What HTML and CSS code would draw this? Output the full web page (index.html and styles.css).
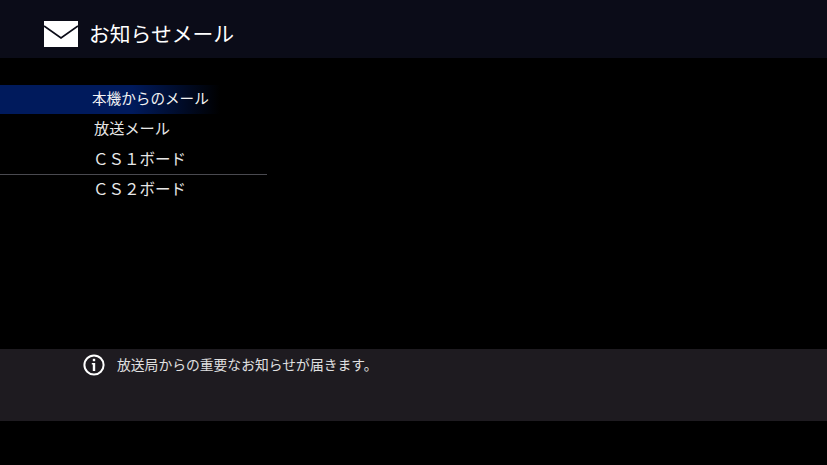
FILE: index.html
```html
<!DOCTYPE html>
<html lang="ja">
<head>
  <meta charset="UTF-8">
  <title>お知らせメール</title>
  <link rel="stylesheet" href="styles.css">
</head>
<body>

<header class="title-bar">
  <svg class="mail-icon" width="34" height="26" viewBox="0 0 34 26">
    <rect width="34" height="26" fill="#fff"/>
    <path d="M0 5 L17 17 L34 5" fill="none" stroke="#0b0c18" stroke-width="1.8"/>
  </svg>
  <h1 class="title">お知らせメール</h1>
</header>

<!-- Mail list -->
<ul class="menu">
  <li class="menu-item selected">本機からのメール</li>
  <li class="menu-item broadcast">放送メール</li>
  <li class="menu-item divided">ＣＳ１ボード</li>
  <li class="menu-item">ＣＳ２ボード</li>
</ul>

<!-- Help bar -->
<div class="help-bar">
  <svg class="info-icon" width="22" height="22" viewBox="0 0 22 22">
    <circle cx="11" cy="11" r="9.6" fill="none" stroke="#fff" stroke-width="2"/>
    <rect x="9.8" y="4.8" width="2.4" height="2.4" fill="#fff"/>
    <path d="M8.8 9 H12.2 V17 H9.8 V10.4 H8.8 Z" fill="#fff"/>
  </svg>
  <p class="help-text">放送局からの重要なお知らせが届きます。</p>
</div>

</body>
</html>
```

FILE: styles.css
```css
* {
  margin: 0;
  padding: 0;
  box-sizing: border-box;
  font-family: "Noto Sans CJK JP", "Liberation Sans", sans-serif;
}

html, body {
  height: 100%;
  overflow: hidden;
}

body {
  background: #000;
  color: #fff;
  display: flex;
  flex-direction: column;
}

.title-bar {
  height: 58px;
  background: #0b0c18;
  display: flex;
  align-items: center;
  padding: 10px 0 0 44px;
  flex-shrink: 0;
}

.mail-icon {
  margin-right: 11px;
}

.title {
  font-size: 20.8px;
  font-weight: 400;
  line-height: 26px;
  padding-bottom: 2px;
}

.menu {
  list-style: none;
  margin-top: 27px;
  width: 267px;
  flex-grow: 1;
}

.menu-item {
  height: 30px;
  padding-left: 93px;
  font-size: 15.5px;
  line-height: 28px;
  color: #e8e8e8;
}

.menu-item.selected {
  width: 220px;
  height: 29px;
  padding-left: 92px;
  font-size: 14.6px;
  line-height: 25px;
  color: #f4f4f4;
  background: linear-gradient(to right, #001a5c 0%, #001a5c 60%, #000 100%);
}

.menu-item.broadcast {
  padding-left: 94px;
  font-size: 15.2px;
  line-height: 26px;
}

.menu-item.divided {
  height: 31px;
  margin-bottom: -1px;
  border-bottom: 1px solid #4a4a50;
}

.help-bar {
  height: 72px;
  margin-bottom: 44px;
  background: #1e1b20;
  display: flex;
  align-items: flex-start;
  padding: 5px 0 0 83px;
  flex-shrink: 0;
}

.info-icon {
  margin-right: 12px;
}

.help-text {
  font-size: 13.8px;
  line-height: 20px;
  color: #e0e0e0;
}
```
